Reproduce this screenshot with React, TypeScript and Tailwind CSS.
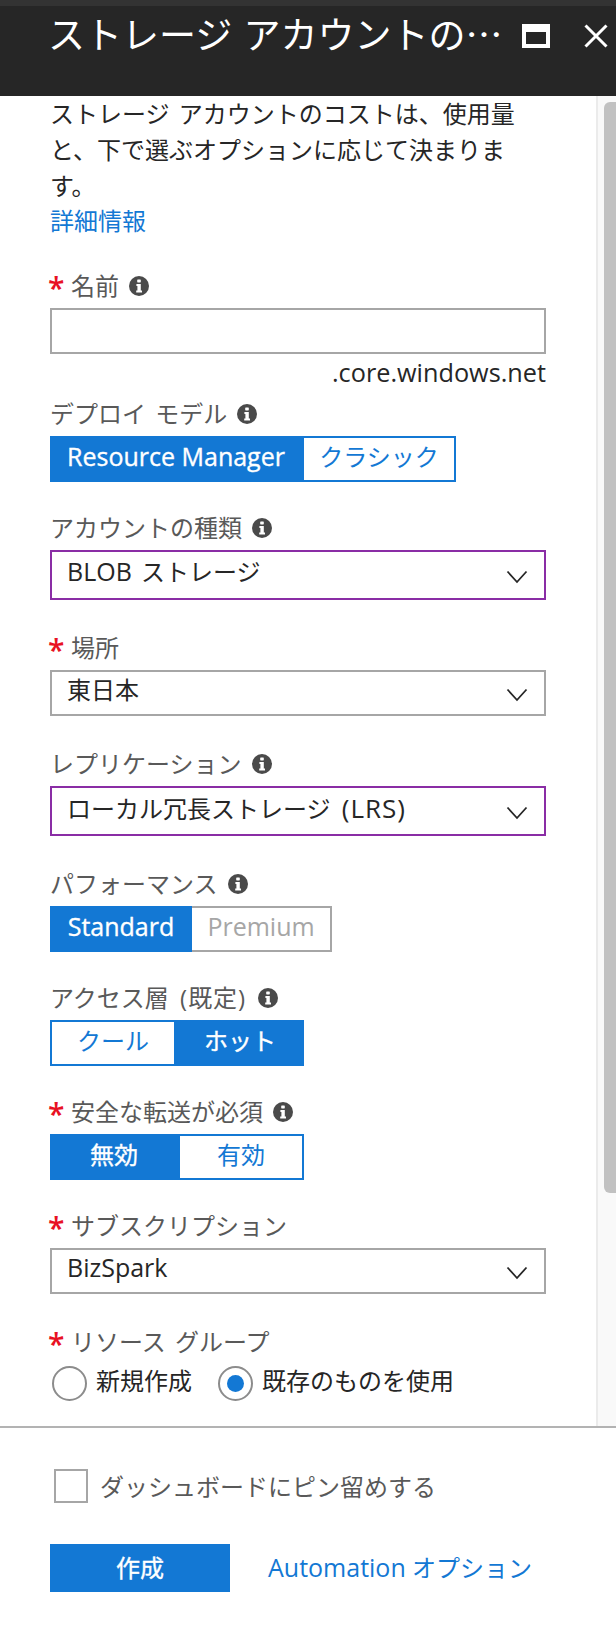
import type { ReactNode } from 'react';

const FONT = "font-['Open_Sans','Noto_Sans_CJK_JP',sans-serif]";

function InfoIcon() {
  return (
    <svg width="20" height="20" viewBox="0 0 20 20" className="shrink-0">
      <circle cx="10" cy="10" r="10" fill="#4a4a4a" />
      <rect x="8.2" y="3.4" width="3.6" height="3" rx="0.6" fill="#fff" />
      <path d="M7.4 8h4.4v6.6h1.2v2H7.2v-2h1.2V10H7.4z" fill="#fff" />
    </svg>
  );
}

function Chevron() {
  return (
    <svg width="22" height="14" viewBox="0 0 22 14" className="mt-[3px] shrink-0">
      <path d="M1.5 1.5 11 12 20.5 1.5" fill="none" stroke="#262626" strokeWidth="1.8" />
    </svg>
  );
}

function Latin({ children }: { children: ReactNode }) {
  return <span className="text-[25px] [word-spacing:0]">{children}</span>;
}

function Label({ required, info, children }: { required?: boolean; info?: boolean; children: ReactNode }) {
  return (
    <div className="flex h-8 items-center text-[24px] leading-8 text-[#595959]">
      {required && (
        <span className="-ml-[2px] w-[23px] self-start text-[30px] leading-[36px] font-semibold text-[#e81123]">*</span>
      )}
      <span>{children}</span>
      {info && (
        <span className="ml-[10px]">
          <InfoIcon />
        </span>
      )}
    </div>
  );
}

function Select({ value, purple }: { value: ReactNode; purple?: boolean }) {
  return (
    <div
      className={
        purple
          ? 'mt-[6px] flex h-[50px] w-[496px] items-center justify-between border-2 border-[#8a2da5] pl-[15px] pr-[16px] text-[24px] text-[#262626]'
          : 'mt-[6px] flex h-[46px] w-[496px] items-center justify-between border-2 border-[#a6a6a6] pl-[15px] pr-[16px] text-[24px] text-[#262626]'
      }
    >
      <span className="-mt-[6px]">{value}</span>
      <Chevron />
    </div>
  );
}

type ToggleOption = { text: ReactNode; id: string; active?: boolean; width: number };

function Toggle({ options, gray }: { options: ToggleOption[]; gray?: boolean }) {
  return (
    <div className="mt-[6px] flex h-[46px] text-[24px]">
      {options.map((o) => (
        <div
          key={o.id}
          style={{ width: o.width }}
          className={
            o.active
              ? 'flex items-center justify-center bg-[#1378d4] pb-[4px] text-white [-webkit-text-stroke:0.35px_white]'
              : gray
                ? 'flex items-center justify-center border-2 border-l-0 border-[#a6a6a6] pb-[4px] text-[#a6a6a6]'
                : 'flex items-center justify-center border-2 border-[#1378d4] pb-[4px] text-[#1378d4]'
          }
        >
          {o.text}
        </div>
      ))}
    </div>
  );
}

function Radio({ checked }: { checked?: boolean }) {
  return (
    <span className="flex h-[35px] w-[35px] shrink-0 items-center justify-center rounded-full border-2 border-[#8c8c8c]">
      {checked && <span className="h-[17px] w-[17px] rounded-full bg-[#1378d4]" />}
    </span>
  );
}

export default function App() {
  return (
    <div lang="ja" className={`${FONT} flex h-[1628px] w-[616px] flex-col overflow-hidden bg-white [word-spacing:3px]`}>
      {/* header */}
      <div className="flex h-[96px] shrink-0 items-start border-t-[6px] border-[#333333] bg-[#262626] pl-[48px] text-white">
        <div className="w-[452px] pt-[2px] font-['Noto_Sans_CJK_JP',sans-serif] text-[37px] leading-[50px] whitespace-nowrap">
          ストレージ アカウントの…
        </div>
        <svg width="28" height="24" viewBox="0 0 28 24" className="ml-[22px] mt-[18px] shrink-0">
          <path d="M0 0h28v24H0z M4 8v12h20V8z" fill="#fff" fillRule="evenodd" />
        </svg>
        <svg width="24" height="24" viewBox="0 0 24 24" className="ml-[34px] mt-[18px] shrink-0">
          <path d="M1.5 1.5 22.5 22.5M22.5 1.5 1.5 22.5" stroke="#fff" strokeWidth="3" />
        </svg>
      </div>

      {/* scrolling form */}
      <div className="flex h-[1330px] shrink-0">
        <div className="w-[596px] shrink-0 pl-[50px]">
          <p className="w-[480px] text-[24px] leading-[36px] text-[#262626]">
            ストレージ アカウントのコストは、使用量と、下で選ぶオプションに応じて決まります。
          </p>
          <div className="text-[24px] leading-[34px] text-[#1378d4]">詳細情報</div>

          <div className="mt-[32px]">
            <Label required info>名前</Label>
          </div>
          <div className="mt-[6px] h-[46px] w-[496px] border-2 border-[#a6a6a6]" />
          <div className="w-[496px] text-right text-[25.25px] leading-[36px] text-[#262626]">.core.windows.net</div>

          <div className="mt-[8px]">
            <Label info>デプロイ モデル</Label>
          </div>
          <Toggle
            options={[
              { id: 'rm', text: <Latin>Resource Manager</Latin>, active: true, width: 252 },
              { id: 'classic', text: 'クラシック', width: 154 },
            ]}
          />

          <div className="mt-[30px]">
            <Label info>アカウントの種類</Label>
          </div>
          <Select value={<><Latin>BLOB</Latin> ストレージ</>} purple />

          <div className="mt-[32px]">
            <Label required>場所</Label>
          </div>
          <Select value="東日本" />

          <div className="mt-[32px]">
            <Label info>レプリケーション</Label>
          </div>
          <Select value={<>ローカル冗長ストレージ <span className="ml-[2px] text-[26px] tracking-[1px]">(LRS)</span></>} purple />

          <div className="mt-[32px]">
            <Label info>パフォーマンス</Label>
          </div>
          <Toggle
            gray
            options={[
              { id: 'std', text: <Latin>Standard</Latin>, active: true, width: 142 },
              { id: 'prem', text: <Latin>Premium</Latin>, width: 140 },
            ]}
          />

          <div className="mt-[30px]">
            <Label info>アクセス層 <span className="mx-[2px] tracking-[1px]">(既定)</span></Label>
          </div>
          <Toggle
            options={[
              { id: 'cool', text: 'クール', width: 126 },
              { id: 'hot', text: 'ホット', active: true, width: 128 },
            ]}
          />

          <div className="mt-[30px]">
            <Label required info>安全な転送が必須</Label>
          </div>
          <Toggle
            options={[
              { id: 'off', text: '無効', active: true, width: 128 },
              { id: 'on', text: '有効', width: 126 },
            ]}
          />

          <div className="mt-[30px]">
            <Label required>サブスクリプション</Label>
          </div>
          <Select value={<Latin>BizSpark</Latin>} />

          <div className="mt-[32px]">
            <Label required>リソース グループ</Label>
          </div>
          <div className="mt-[8px] flex pl-[2px] text-[24px] leading-[30px] text-[#262626]">
            <Radio />
            <span className="ml-[9px]">新規作成</span>
            <span className="ml-[26px]">
              <Radio checked />
            </span>
            <span className="ml-[9px]">既存のものを使用</span>
          </div>
        </div>

        {/* scrollbar */}
        <div className="w-[20px] shrink-0 border-l-2 border-[#ebebeb] bg-[#f9f9f9] pl-[6px] pt-[6px]">
          <div className="h-[1091px] w-[12px] rounded-l-[6px] bg-[#c1c1c1]" />
        </div>
      </div>

      {/* footer */}
      <div className="flex grow flex-col border-t-2 border-[#b3b3b3] pl-[50px]">
        <div className="mt-[40px] flex items-center pl-[4px]">
          <span className="h-[34px] w-[34px] shrink-0 border-2 border-[#a6a6a6]" />
          <span className="ml-[12px] mt-[2px] text-[24px] leading-[34px] text-[#595959]">ダッシュボードにピン留めする</span>
        </div>
        <div className="mt-[40px] flex items-center">
          <div className="flex h-[48px] w-[180px] items-center justify-center bg-[#1378d4] text-[24px] text-white [-webkit-text-stroke:0.35px_white]">
            作成
          </div>
          <span className="ml-[38px] text-[24px] text-[#1378d4] [word-spacing:0]"><Latin>Automation</Latin> オプション</span>
        </div>
      </div>
    </div>
  );
}
